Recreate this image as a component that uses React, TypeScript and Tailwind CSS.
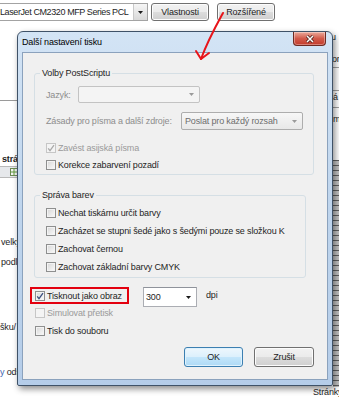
import React from "react";

const FONT = "font-['Liberation_Sans',Arial,sans-serif]";

function Tri({ gray = false }: { gray?: boolean }) {
  return (
    <svg width="5" height="3" viewBox="0 0 5 3" className="shrink-0">
      <path d="M0 0H5L2.5 3Z" fill={gray ? "#9a9a9a" : "#1a1a1a"} />
    </svg>
  );
}

function Check({ checked = false, disabled = false }: { checked?: boolean; disabled?: boolean }) {
  return (
    <span
      className={
        disabled
          ? "flex h-[10px] w-[10px] shrink-0 items-center justify-center border border-[#c6c6c6] bg-[#f4f4f4]"
          : "flex h-[10px] w-[10px] shrink-0 items-center justify-center border border-[#8e8f8f] bg-linear-to-br from-[#d6d6d6] to-[#fbfbfb] shadow-[inset_0_0_0_1px_#f3f3f3]"
      }
    >
      {checked && (
        <svg width="8" height="8" viewBox="0 0 8 8">
          <path d="M1.2 4.3 L3 6.6 L7 1.2" fill="none" stroke={disabled ? "#a9a9a9" : "#3a4f80"} strokeWidth="1.3" />
        </svg>
      )}
    </span>
  );
}

function CheckRow({
  label,
  checked = false,
  disabled = false,
  className = "",
}: {
  label: string;
  checked?: boolean;
  disabled?: boolean;
  className?: string;
}) {
  return (
    <div className={`flex items-center gap-[2px] whitespace-nowrap ${className}`}>
      <Check checked={checked} disabled={disabled} />
      <span className={disabled ? "text-[#9a9a9a]" : ""}>{label}</span>
    </div>
  );
}

function Btn({ children, def = false, className = "" }: { children: React.ReactNode; def?: boolean; className?: string }) {
  return (
    <div
      className={`flex items-center justify-center rounded-[3px] border ${
        def
          ? "border-[#3c7fb1] bg-[linear-gradient(#eef7fd_0%,#dcf0fc_50%,#c4e6fb_50%,#aedaf5_100%)] shadow-[inset_0_0_0_1px_#dff2fd]"
          : "border-[#707070] bg-[linear-gradient(#f2f2f2_0%,#ebebeb_50%,#dddddd_50%,#cfcfcf_100%)] shadow-[inset_0_0_0_1px_#fcfcfc]"
      } ${className}`}
    >
      {children}
    </div>
  );
}

function Legend({ children }: { children: React.ReactNode }) {
  return <div className="-mt-[7px] ml-[5px] w-fit bg-[#f0f0f0] px-[2px]">{children}</div>;
}

export default function App() {
  return (
    <div className={`relative h-[397px] w-[339px] overflow-hidden bg-white text-[9px] leading-[12px] tracking-[-0.15px] text-[#1e1e1e] ${FONT}`}>
      {/* background window */}
      <div className="flex h-full flex-col">
        <div className="mt-[3px] -ml-[3px] flex h-[18px] items-stretch">
          <div className="flex w-[151px] border border-[#a3a3a3] bg-white">
            <div className="flex-1 overflow-hidden whitespace-nowrap pl-[2px] leading-[16px] tracking-[-0.4px]">LaserJet CM2320 MFP Series PCL</div>
            <div className="flex w-[14px] items-center justify-center border-l border-[#c9c9c9] bg-linear-to-b from-[#f6f6f6] to-[#d9d9d9]">
              <Tri />
            </div>
          </div>
          <Btn className="ml-[3px] w-[58px]">Vlastnosti</Btn>
          <Btn className="ml-[8px] w-[58px]">Rozšířené</Btn>
        </div>

        <div className="flex h-[366px] justify-between">
          <div className="flex w-[40px] flex-col whitespace-nowrap">
            <div className="mt-[79px] h-px bg-[#9a9a9a]" />
            <div className="mt-[52px] pl-[2px] font-bold">stránky</div>
            <div className="mt-[1px] flex h-[12px] items-center border-y border-[#b9b9b9] bg-[#e6e8eb] pl-[10px]">
              <svg width="8" height="8" viewBox="0 0 8 8">
                <rect x="0.5" y="0.5" width="7" height="7" fill="#f4f4f4" stroke="#6c8a55" />
                <path d="M0.5 4H7.5M4 0.5V7.5" stroke="#5f9a3c" />
              </svg>
            </div>
            <div className="mt-[58px] pl-px">velký</div>
            <div className="mt-[8px] pl-px">podle</div>
            <div className="mt-[53px]">šku/</div>
            <div className="mt-[33px]">
              <span className="text-[#3f66b0]">y</span> odsazení
            </div>
          </div>
          <div className="flex w-[6px] flex-col overflow-hidden whitespace-nowrap">
            <div className="mt-[10px] -ml-[2px]">u</div>
            <div className="mt-[10px] -ml-[1px]">or</div>
            <div className="mt-[2px] h-px bg-[#a0a0a0]" />
            <div className="mt-[22px] h-px bg-[#a0a0a0]" />
            <div>á</div>
            <div className="mt-[4px] h-px bg-[#a0a0a0]" />
            <div className="mt-[5px]">m</div>
            <div className="mt-[35px] flex-1 bg-[repeating-linear-gradient(to_bottom,#5e5e5e_0px,#5e5e5e_1px,#c2c2c2_1px,#c2c2c2_5px)]" />
          </div>
        </div>

        <div className="overflow-hidden whitespace-nowrap pl-[313px] leading-[10px]">Stránky</div>
      </div>

      {/* dialog window */}
      <div className="absolute left-[17px] top-[31px] flex h-[355px] w-[316px] flex-col rounded-t-[6px] rounded-b-[2px] border border-[#3f5268] bg-linear-to-b from-[#d3e4f5] via-[#bfd5ed] to-[#b5cde9] px-[4px] pb-[5px] shadow-[2px_3px_6px_rgba(0,0,0,0.45)]">
        <div className="flex h-[20px] items-start justify-between">
          <div className="pt-[4px] text-black">Další nastavení tisku</div>
          <div className="mr-[2px] flex h-[14px] w-[33px] items-center justify-center rounded-b-[4px] border border-t-0 border-[#6e2a22] bg-linear-to-b from-[#eaa99b] via-[#d25a4b] to-[#c23b2b] shadow-[inset_0_0_0_1px_rgba(255,255,255,0.35)]">
            <svg width="10" height="8" viewBox="0 0 10 8">
              <path d="M2 1L8 7M8 1L2 7" stroke="#4a1d16" strokeWidth="3" />
              <path d="M2 1L8 7M8 1L2 7" stroke="#ffffff" strokeWidth="1.5" />
            </svg>
          </div>
        </div>

        <div className="flex h-[328px] flex-col border border-[#8ba2bd] bg-[#f0f0f0]">
          {/* Volby PostScriptu */}
          <div className="ml-[11px] mt-[20px] h-[102px] w-[280px] rounded-[3px] border border-[#d5dfe5]">
            <Legend>Volby PostScriptu</Legend>
            <div className="mt-[7px] flex h-[17px] items-center pl-[11px]">
              <span className="w-[32px] text-[#8d8d8d]">Jazyk:</span>
              <div className="flex h-[17px] w-[122px] items-center justify-end rounded-[2px] border border-[#c3c3c3] bg-[#f4f4f4] pr-[5px]">
                <Tri gray />
              </div>
            </div>
            <div className="mt-[9px] flex h-[18px] items-center pl-[11px]">
              <span className="w-[135px] whitespace-nowrap text-[#8d8d8d]">Zásady pro písma a další zdroje:</span>
              <div className="flex h-[18px] w-[122px] items-center justify-between rounded-[2px] border border-[#adadad] bg-linear-to-b from-[#f7f7f7] to-[#e8e8e8] pl-[3px] pr-[5px] text-[#6d6d6d]">
                <span className="whitespace-nowrap">Poslat pro každý rozsah</span>
                <Tri gray />
              </div>
            </div>
            <CheckRow className="mt-[9px] h-[17px] pl-[11px]" label="Zavést asijská písma" checked disabled />
            <CheckRow className="h-[17px] pl-[11px]" label="Korekce zabarvení pozadí" />
          </div>

          {/* Správa barev */}
          <div className="ml-[11px] mt-[20px] h-[83px] w-[272px] rounded-[3px] border border-[#d5dfe5]">
            <Legend>Správa barev</Legend>
            <div className="mt-[3px] flex flex-col pl-[11px]">
              <CheckRow className="h-[18px]" label="Nechat tiskárnu určit barvy" />
              <CheckRow className="h-[18px]" label="Zacházet se stupni šedé jako s šedými pouze se složkou K" />
              <CheckRow className="h-[18px]" label="Zachovat černou" />
              <CheckRow className="h-[18px]" label="Zachovat základní barvy CMYK" />
            </div>
          </div>

          {/* bottom options */}
          <div className="mt-[9px] flex h-[17px] items-start">
            <div className="ml-[7px] flex h-[17px] w-[99px] items-center border-2 border-[#e3000f] pl-[3px]">
              <CheckRow label="Tisknout jako obraz" checked />
            </div>
            <div className="ml-[14px] flex h-[20px] w-[54px] shrink-0 items-center justify-between border border-[#abadb3] border-t-[#8f939b] bg-white pl-[2px] pr-[5px]">
              <span>300</span>
              <Tri />
            </div>
            <div className="ml-[9px] pt-[2px]">dpi</div>
          </div>
          <CheckRow className="h-[18px] pl-[12px]" label="Simulovat přetisk" disabled />
          <CheckRow className="h-[18px] pl-[12px]" label="Tisk do souboru" />

          <div className="mt-[7px] flex justify-end gap-[11px] pr-[13px]">
            <Btn def className="h-[20px] w-[59px]">OK</Btn>
            <Btn className="h-[20px] w-[60px]">Zrušit</Btn>
          </div>
        </div>
      </div>

      {/* red hand-drawn arrow */}
      <svg className="pointer-events-none absolute left-0 top-0" width="339" height="397" viewBox="0 0 339 397">
        <path d="M223 13 C 217 24, 208 40, 201 59" fill="none" stroke="#e8141a" strokeWidth="2" strokeLinecap="round" />
        <path d="M196 51 L201 59 L209 53" fill="none" stroke="#e8141a" strokeWidth="2" strokeLinecap="round" strokeLinejoin="round" />
      </svg>
    </div>
  );
}
